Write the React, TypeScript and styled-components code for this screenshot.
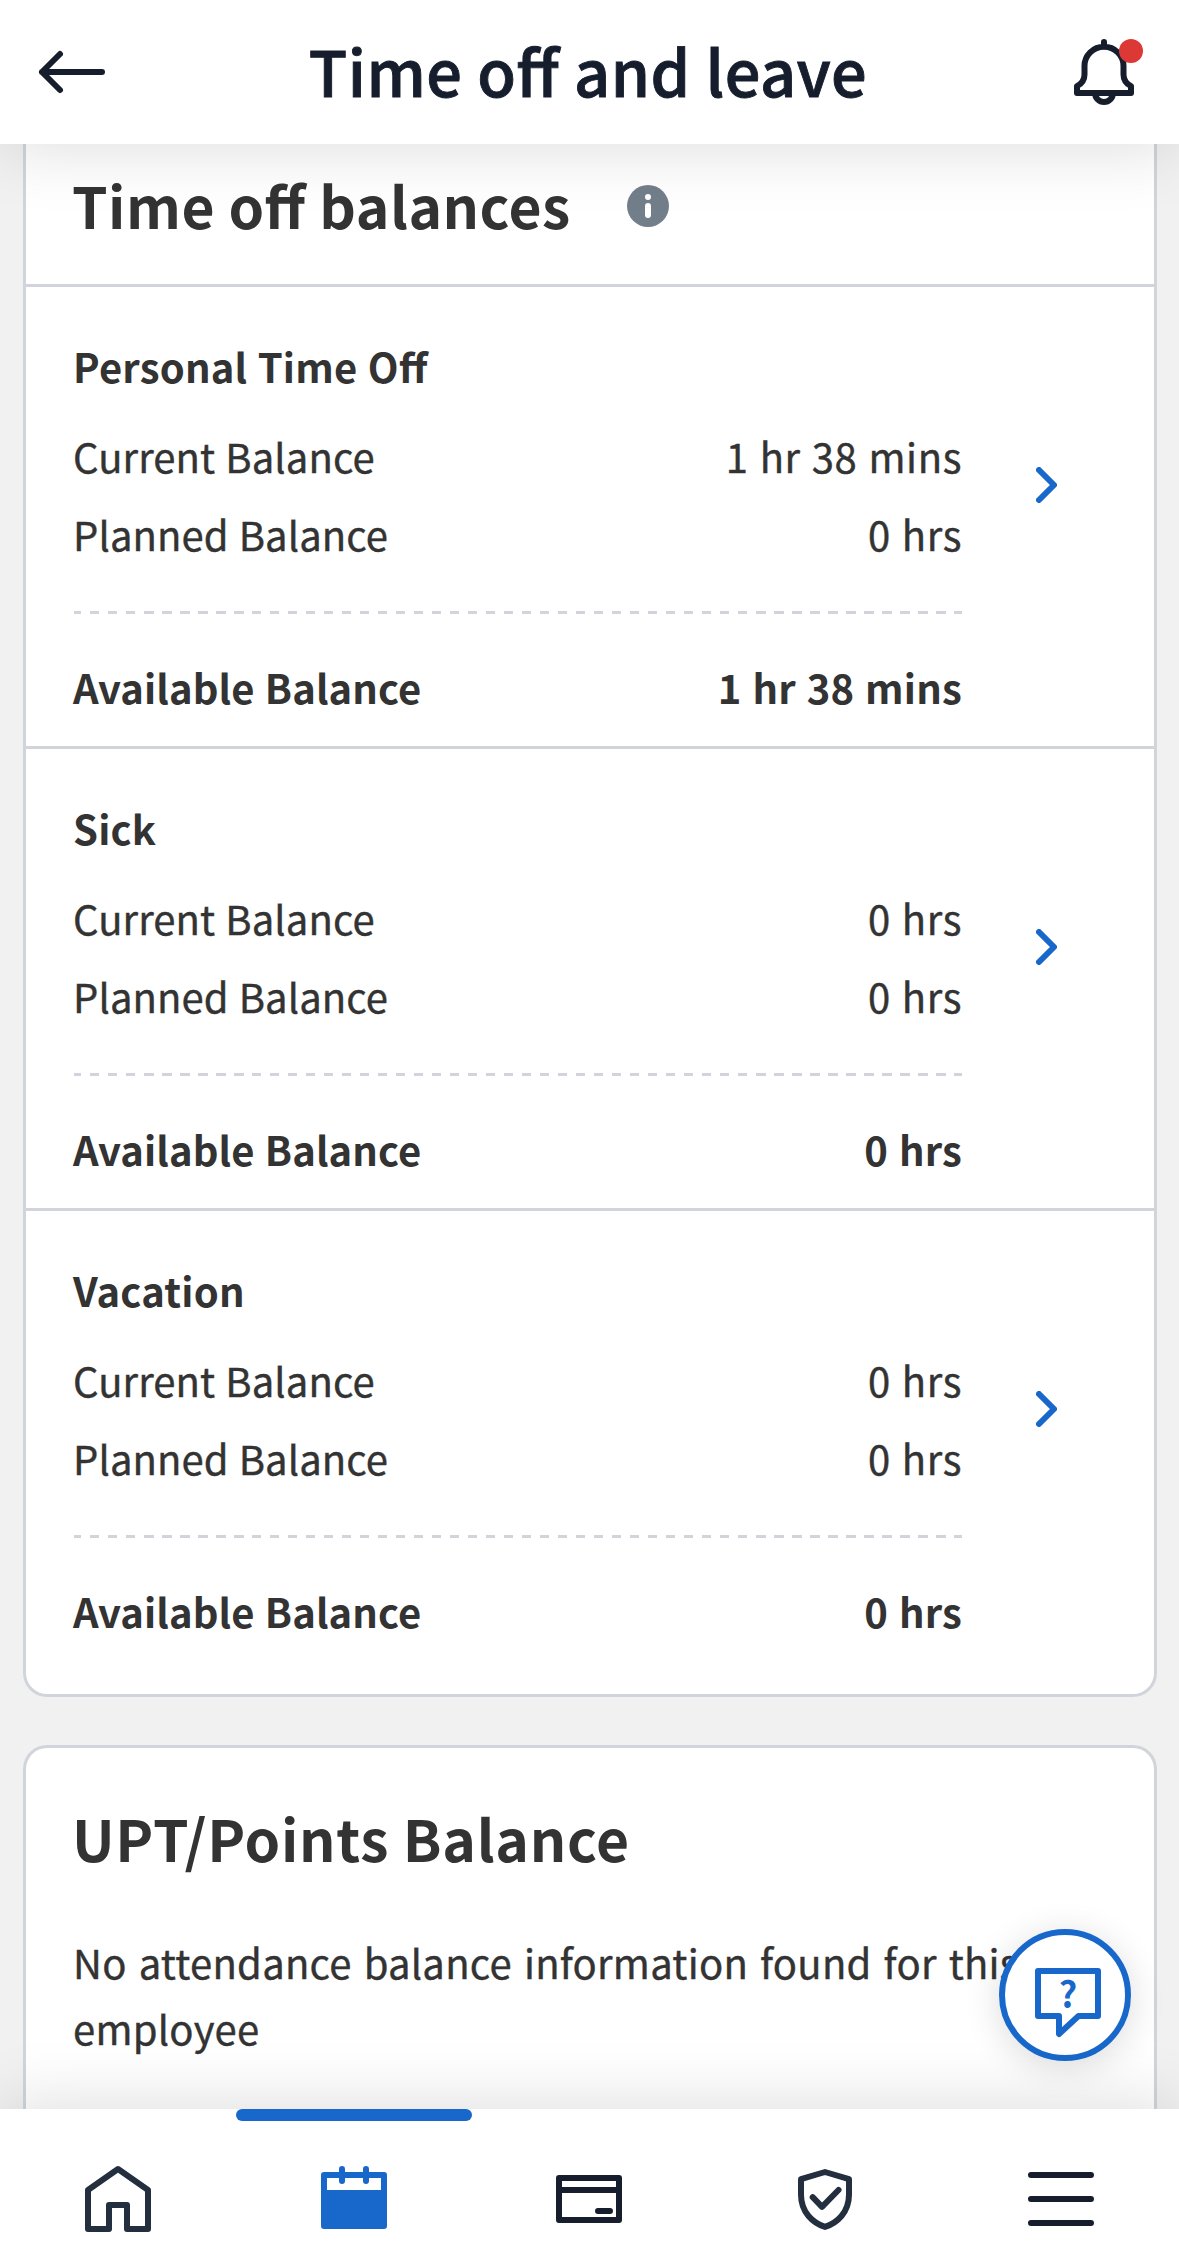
import React from "react";
import styled, { createGlobalStyle } from "styled-components";

const ink = "#161e2d";
const slate = "#232f3e";
const blue = "#1868cb";
const line = "#d1d5db";

const GlobalStyle = createGlobalStyle`
  *, *::before, *::after { box-sizing: border-box; }
  body { margin: 0; background: #f1f1f1; }
`;

const Screen = styled.div`
  position: relative;
  display: flex;
  flex-direction: column;
  width: 1179px;
  height: 2253px;
  overflow: hidden;
  background: #f1f1f1;
  color: #333;
  font-family: "Noto Sans CJK SC", "Noto Sans", sans-serif;
  font-feature-settings: "liga" 1;
`;

const TopBar = styled.header`
  position: relative;
  z-index: 2;
  flex: none;
  display: grid;
  grid-template-columns: 72px 1fr 72px;
  align-items: start;
  height: 144px;
  padding: 36px 39px 0 36px;
  background: #fff;
  box-shadow: 0 6px 66px rgba(0, 7, 22, 0.13);
`;

const PageTitle = styled.h1`
  margin: -2px 0 0;
  text-align: center;
  font-size: 63px;
  font-weight: 500;
  line-height: 72px;
  letter-spacing: 0.5px;
  -webkit-text-stroke: 0.9px ${ink};
  color: ${ink};
`;

const IconButton = styled.button`
  display: block;
  width: 72px;
  height: 72px;
  padding: 0;
  border: 0;
  background: none;
`;

const Icon = styled.svg<{ $color?: string }>`
  display: block;
  flex: none;
  width: 72px;
  height: 72px;
  overflow: visible;
  fill: none;
  stroke: ${(p) => p.$color ?? ink};
  stroke-width: 2;
  stroke-linecap: round;
  stroke-linejoin: round;
`;

const Content = styled.main`
  flex: 1;
  min-height: 0;
  display: flex;
  flex-direction: column;
  gap: 48px;
  padding: 0 22px 0 23px;
  overflow: hidden;
`;

const Card = styled.section<{ $cut: "top" | "bottom" }>`
  flex: ${(p) => (p.$cut === "bottom" ? 1 : "none")};
  border: 3px solid ${line};
  border-radius: ${(p) => (p.$cut === "top" ? "0 0 24px 24px" : "24px 24px 0 0")};
  border-${(p) => p.$cut}: 0;
  background: #fff;
`;

const CardHeader = styled.div`
  display: flex;
  align-items: flex-start;
  gap: 56px;
  height: 143px;
  padding: 24px 48px 0;
  border-bottom: 3px solid ${line};
`;

const Heading = styled.h2<{ $spacing: number }>`
  margin: 0 0 0 -2px;
  font-size: 57px;
  font-weight: 700;
  line-height: 72px;
  letter-spacing: ${(p) => p.$spacing}px;
`;

const InfoIcon = styled.svg`
  width: 42px;
  height: 42px;
  margin-top: 17px;
`;

const Balance = styled.article`
  display: flex;
  align-items: flex-start;
  gap: 74px;
  padding: 55px 48px 29px;
  border-bottom: 3px solid ${line};
  &:last-child {
    padding-bottom: 53px;
    border-bottom: 0;
  }
`;

const Details = styled.div`
  width: 888px;
`;

const BalanceName = styled.h3`
  margin: 0 0 36px -1px;
  font-size: 40px;
  font-weight: 700;
  line-height: 48px;
  letter-spacing: 0.2px;
  word-spacing: 1px;
`;

const Rows = styled.div`
  display: flex;
  flex-direction: column;
  gap: 18px;
`;

const Row = styled.div<{ $strong?: boolean }>`
  display: flex;
  justify-content: space-between;
  font-size: 40px;
  font-weight: ${(p) => (p.$strong ? 700 : 400)};
  -webkit-text-stroke: ${(p) => (p.$strong ? 0 : 0.4)}px #333;
  line-height: 60px;
`;

const Label = styled.span`
  margin-left: -1px;
  letter-spacing: 0.1px;
  word-spacing: 1px;
`;

const Value = styled.span<{ $spacing: number }>`
  letter-spacing: ${(p) => p.$spacing}px;
  word-spacing: 1.5px;
`;

const Dashes = styled.div`
  height: 3px;
  margin: 47px 0 43px;
  background: repeating-linear-gradient(90deg, ${line} 0 9.5px, transparent 9.5px 18px) -2px 0 / 900px 3px;
`;

const Chevron = styled.svg`
  width: 21px;
  height: 36px;
  margin-top: 125px;
  fill: none;
  stroke: ${blue};
  stroke-width: 6;
  stroke-linecap: round;
  stroke-linejoin: round;
`;

const Attendance = styled.div`
  display: flex;
  flex-direction: column;
  gap: 56px;
  padding: 53px 48px;
`;

const Note = styled.p`
  margin: 0 0 0 -1px;
  font-size: 40px;
  line-height: 66px;
  letter-spacing: 0.25px;
  word-spacing: 2.8px;
  -webkit-text-stroke: 0.4px #333;
`;

const HelpButton = styled.button`
  position: absolute;
  z-index: 1;
  right: 48px;
  bottom: 192px;
  display: flex;
  justify-content: center;
  width: 132px;
  height: 132px;
  padding: 30px 0 0 6px;
  border: 6px solid ${blue};
  border-radius: 50%;
  background: #fff;
  box-shadow: 0 6px 36px rgba(0, 7, 22, 0.14);
`;

const QuestionMark = styled.text`
  font-family: "Noto Sans CJK SC", sans-serif;
  font-size: 12px;
  font-weight: 700;
  text-anchor: middle;
  fill: ${blue};
  stroke: none;
`;

const TabBar = styled.nav`
  position: relative;
  z-index: 2;
  flex: none;
  display: grid;
  grid-template-columns: repeat(5, 1fr);
  height: 144px;
  background: #fff;
  box-shadow: 0 -6px 66px rgba(0, 7, 22, 0.13);
`;

const Tab = styled.a<{ $active?: boolean }>`
  display: flex;
  flex-direction: column;
  align-items: center;
  gap: 42px;
  &::before {
    content: "";
    width: 100%;
    height: 12px;
    border-radius: 6px;
    background: ${(p) => (p.$active ? blue : "transparent")};
  }
`;

const balances = [
  { name: "Personal Time Off", current: "1 hr 38 mins", planned: "0 hrs", available: "1 hr 38 mins" },
  { name: "Sick", current: "0 hrs", planned: "0 hrs", available: "0 hrs" },
  { name: "Vacation", current: "0 hrs", planned: "0 hrs", available: "0 hrs" },
];

export default function App() {
  return (
    <Screen>
      <GlobalStyle />
      <TopBar>
        <IconButton aria-label="Back">
          <Icon viewBox="0 0 24 24">
            <path d="M22 12H2M8 6L2 12L8 18" />
          </Icon>
        </IconButton>
        <PageTitle>Time off and leave</PageTitle>
        <IconButton aria-label="Notifications">
          <Icon viewBox="0 0 24 24">
            <path d="M12 2V3.5M3 19V16.7C4.7 15.8 5.5 14.6 5.5 12.8V10A6.5 6.4 0 0 1 18.5 10V12.8C18.5 14.6 19.3 15.8 21 16.7V19ZM9 19A3 3 0 0 0 15 19" />
            <circle cx="21" cy="5" r="4" fill="#dc3835" stroke="none" />
          </Icon>
        </IconButton>
      </TopBar>

      <Content>
        <Card $cut="top">
          <CardHeader>
            <Heading $spacing={0.5}>Time off balances</Heading>
            <InfoIcon viewBox="0 0 42 42">
              <circle cx="21" cy="21" r="21" fill="#727f8b" />
              <circle cx="21" cy="12" r="3" fill="#fff" />
              <rect x="18" y="18" width="6" height="15" rx="3" fill="#fff" />
            </InfoIcon>
          </CardHeader>
          {balances.map((b) => (
            <Balance key={b.name}>
              <Details>
                <BalanceName>{b.name}</BalanceName>
                <Rows>
                  <Row>
                    <Label>Current Balance</Label>
                    <Value $spacing={0.6}>{b.current}</Value>
                  </Row>
                  <Row>
                    <Label>Planned Balance</Label>
                    <Value $spacing={0.6}>{b.planned}</Value>
                  </Row>
                </Rows>
                <Dashes />
                <Row $strong>
                  <Label>Available Balance</Label>
                  <Value $spacing={0.2}>{b.available}</Value>
                </Row>
              </Details>
              <Chevron viewBox="0 0 21 36">
                <path d="M3 3L18 18L3 33" />
              </Chevron>
            </Balance>
          ))}
        </Card>

        <Card $cut="bottom">
          <Attendance>
            <Heading $spacing={0.7}>UPT/Points Balance</Heading>
            <Note>No attendance balance information found for this employee</Note>
          </Attendance>
        </Card>
      </Content>

      <HelpButton aria-label="Help">
        <Icon viewBox="0 0 24 24" $color={blue}>
          <path d="M2 2H22V17H15.5L9 23V17H2Z" />
          <QuestionMark x="12" y="14.3">?</QuestionMark>
        </Icon>
      </HelpButton>

      <TabBar>
        <Tab aria-label="Home">
          <Icon viewBox="0 0 24 24" $color={slate}>
            <path d="M12 2L22 9V22H15V14H9V22H2V9Z" />
          </Icon>
        </Tab>
        <Tab aria-label="Calendar" $active>
          <Icon viewBox="0 0 24 24" $color={blue}>
            <path d="M2 4H22V21H2Z" />
            <path d="M2 9H22V21H2Z" fill={blue} stroke="none" />
            <path d="M8 2V6M16 2V6" />
          </Icon>
        </Tab>
        <Tab aria-label="Pay">
          <Icon viewBox="0 0 24 24">
            <path d="M2 5H22V19H2ZM2 9H22M15 16H19" />
          </Icon>
        </Tab>
        <Tab aria-label="Benefits">
          <Icon viewBox="0 0 24 24" $color={slate}>
            <path d="M12 3L20 5.4V10.5C20 16.5 16 20 12 21.3C8 20 4 16.5 4 10.5V5.4Z" />
            <path d="M7.9 11.4L11 14.6L16.5 9" />
          </Icon>
        </Tab>
        <Tab aria-label="Menu">
          <Icon viewBox="0 0 24 24">
            <path d="M2 4H22M2 12H22M2 20H22" />
          </Icon>
        </Tab>
      </TabBar>
    </Screen>
  );
}
